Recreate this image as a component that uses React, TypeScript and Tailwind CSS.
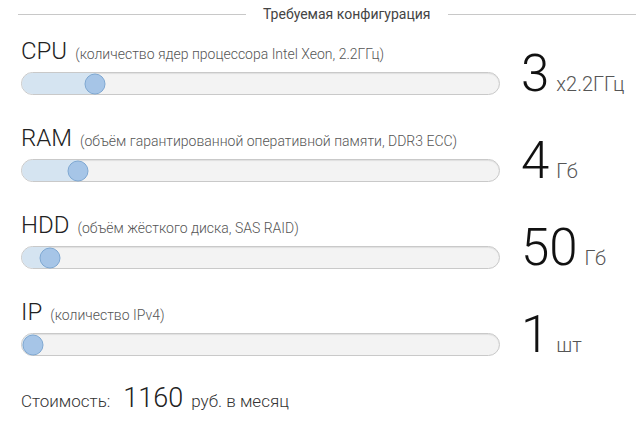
import React from "react";

type Row = {
  id: string;
  name: string;
  hint: string;
  value: string;
  unit: string;
  pos: number; // thumb centre, px from track left
};

const ROWS: Row[] = [
  { id: "cpu", name: "CPU", hint: "(количество ядер процессора Intel Xeon, 2.2ГГц)", value: "3", unit: "x2.2ГГц", pos: 73 },
  { id: "ram", name: "RAM", hint: "(объём гарантированной оперативной памяти, DDR3 ECC)", value: "4", unit: "Гб", pos: 56 },
  { id: "hdd", name: "HDD", hint: "(объём жёсткого диска, SAS RAID)", value: "50", unit: "Гб", pos: 28 },
  { id: "ip", name: "IP", hint: "(количество IPv4)", value: "1", unit: "шт", pos: 11 },
];

function Slider({ pos }: { pos: number }) {
  return (
    <div className="relative h-[23px] w-[479px] rounded-full border border-[#c9c9c9] bg-[#f3f3f3] shadow-[inset_0_1px_1px_rgba(0,0,0,0.08)]">
      <div
        className="absolute left-0 top-0 h-full rounded-l-full bg-[#d5e4f1]"
        style={{ width: pos }}
      />
      <div
        className="absolute top-1/2 h-[21px] w-[21px] -translate-x-1/2 -translate-y-1/2 rounded-full border border-[#7fa8d2] bg-[#a6c5e7]"
        style={{ left: pos }}
      />
    </div>
  );
}

function ConfigRow({ row }: { row: Row }) {
  return (
    <div className="flex items-end">
      <div className="flex flex-col">
        <div className="flex h-[28px] items-baseline gap-[8px]">
          <span className="text-[24px] font-light leading-[28px] text-[#222]">{row.name}</span>
          <span className="text-[14px] font-light leading-[16px] text-[#555]">{row.hint}</span>
        </div>
        <div className="mt-[7px]">
          <Slider pos={row.pos} />
        </div>
      </div>
      <div className="ml-[21px] flex items-baseline">
        <span className="text-[51px] font-light leading-[30px] text-[#111]">{row.value}</span>
        <span className="ml-[7px] text-[20px] font-light leading-[22px] text-[#555]">{row.unit}</span>
      </div>
    </div>
  );
}

export default function App() {
  return (
    <div className="h-[427px] w-[636px] overflow-hidden bg-white font-['Roboto',sans-serif] text-[#333]">
      <div className="flex h-[28px] items-center pl-[18px]">
        <div className="h-px w-[228px] bg-[#c8c8c8]" />
        <span className="mx-[17px] whitespace-nowrap text-[14px] text-[#444]">Требуемая конфигурация</span>
        <div className="h-px flex-1 bg-[#c8c8c8]" />
      </div>

      <div className="mt-[9px] flex flex-col gap-[29px] pl-[21px]">
        {ROWS.map((row) => (
          <ConfigRow key={row.id} row={row} />
        ))}
      </div>

      <div className="mt-[22px] flex items-baseline pl-[21px] font-light text-[#333]">
        <span className="text-[17px]">Стоимость:</span>
        <span className="ml-[13px] text-[27px] text-[#222]">1160</span>
        <span className="ml-[8px] text-[17px]">руб. в месяц</span>
      </div>
    </div>
  );
}
